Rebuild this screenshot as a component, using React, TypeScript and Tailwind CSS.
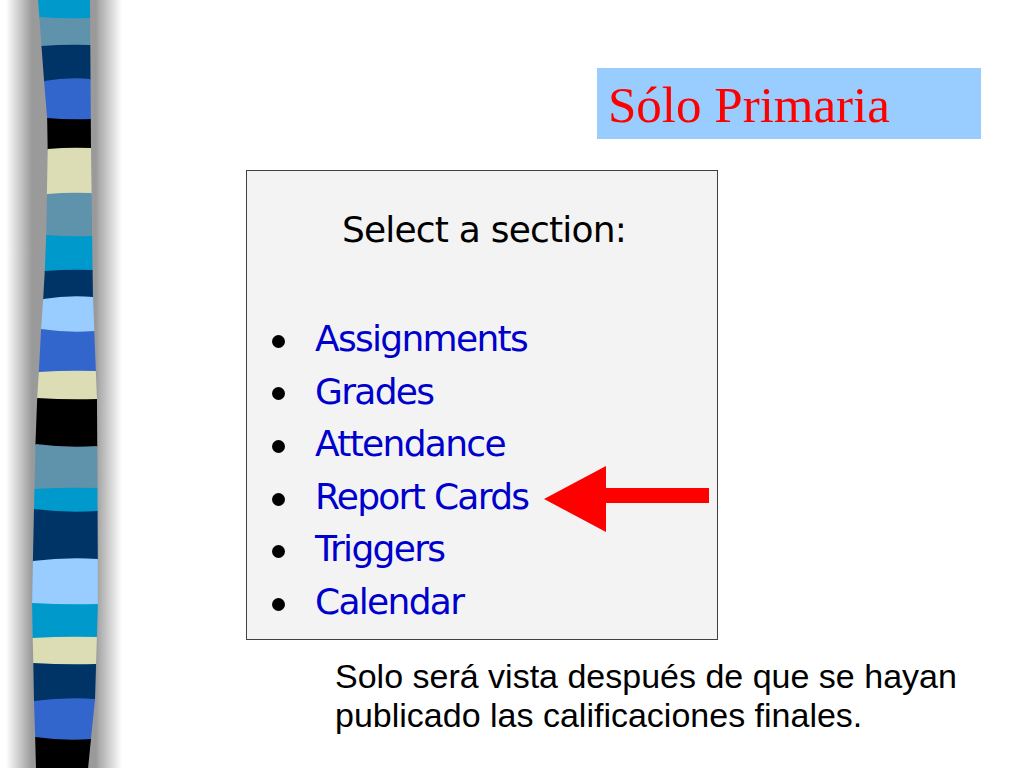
const C = {
  cyan: '#0099cc',
  steel: '#5f92ab',
  navy: '#003366',
  royal: '#3366cc',
  black: '#000000',
  beige: '#ddddb5',
  light: '#99ccff',
};

// [top, bottom, colour, tilt of the top edge]
const stripes: [number, number, string, number][] = [
  [0, 18, C.cyan, 0],
  [18, 45, C.steel, -1],
  [45, 79, C.navy, 1],
  [79, 119, C.royal, 2],
  [119, 148, C.black, -1],
  [148, 193, C.beige, 1],
  [193, 236, C.steel, 1],
  [236, 270, C.cyan, -1],
  [270, 297, C.navy, 1],
  [297, 331, C.light, 2],
  [331, 371, C.royal, -2],
  [371, 399, C.beige, 1],
  [399, 446, C.black, -1],
  [446, 488, C.steel, -2],
  [488, 511, C.cyan, 1],
  [511, 559, C.navy, -2],
  [559, 604, C.light, 2],
  [604, 637, C.cyan, -1],
  [637, 664, C.beige, 1],
  [664, 699, C.navy, -1],
  [699, 739, C.royal, 2],
  [739, 768, C.black, -2],
];

const leftPts = [[0, 38], [130, 48], [250, 46], [350, 40], [420, 36], [600, 32], [700, 34], [768, 36]];
const rightPts = [[0, 90], [150, 91], [300, 93], [400, 97], [600, 98], [700, 95], [768, 88]];

function edge(pts: number[][], y: number) {
  for (let i = 1; i < pts.length; i++) {
    const [y0, x0] = pts[i - 1];
    const [y1, x1] = pts[i];
    if (y <= y1) return x0 + ((x1 - x0) * (y - y0)) / (y1 - y0);
  }
  return pts[pts.length - 1][1];
}

function StripeBand() {
  return (
    <div className="w-[122px] h-[768px] shrink-0 bg-[linear-gradient(to_right,#ffffff_6px,#9a9a9a_32px,#9a9a9a_96px,#aaaaaa_99px,#ffffff_122px)]">
      <svg width="122" height="768" viewBox="0 0 122 768">
        {stripes.map(([top, bottom, color, tilt], i) => {
          const next = stripes[i + 1];
          const bTilt = next ? next[3] : 0;
          const b = bottom + 1;
          const d = `M${edge(leftPts, top)} ${top + tilt} Q${(edge(leftPts, top) + edge(rightPts, top)) / 2} ${top - tilt} ${edge(rightPts, top)} ${top} L${edge(rightPts, b)} ${b} Q${(edge(leftPts, b) + edge(rightPts, b)) / 2} ${b - bTilt} ${edge(leftPts, b)} ${b + bTilt} Z`;
          return <path key={i} d={d} fill={color} />;
        })}
      </svg>
    </div>
  );
}

const items = ['Assignments', 'Grades', 'Attendance', 'Report Cards', 'Triggers', 'Calendar'];

export default function App() {
  return (
    <div className="w-[1024px] h-[768px] bg-white flex overflow-hidden">
      <StripeBand />
      <div className="flex flex-col">
        <div className="mt-[68px] ml-[475px] w-[384px] h-[71px] bg-[#99ccff] pl-[11px] pt-[3px] leading-[68px] text-[51px] text-[#ff0000] font-['Liberation_Serif',serif]">
          Sólo Primaria
        </div>

        <div className="relative mt-[31px] ml-[124px] w-[472px] h-[470px] border border-[#404040] bg-[#f3f3f3] font-['DejaVu_Sans',sans-serif]">
          <div className="pt-[39px] pl-[4px] text-center text-[36px] leading-[40px] tracking-[-0.8px] text-black">
            Select a section:
          </div>
          <ul className="mt-[63px]">
            {items.map((item) => (
              <li key={item} className="flex items-center h-[52.6px] pl-[25px]">
                <span className="w-[13px] h-[13px] mt-[4px] rounded-full bg-black" />
                <span className="ml-[30px] text-[36px] leading-[52.6px] tracking-[-1.7px] text-[#0000cc]">
                  {item}
                </span>
              </li>
            ))}
          </ul>
          <svg className="absolute left-[297px] top-[295px]" width="166" height="67" viewBox="0 0 166 67">
            <polygon points="0,33 62,0 62,22 165,22 165,37 62,37 62,66" fill="#ff0000" />
          </svg>
        </div>

        <p className="mt-[17px] ml-[213px] text-[34px] leading-[39px] text-black font-['Liberation_Sans',Arial,sans-serif]">
          Solo será vista después de que se hayan
          <br />
          publicado las calificaciones finales.
        </p>
      </div>
    </div>
  );
}
